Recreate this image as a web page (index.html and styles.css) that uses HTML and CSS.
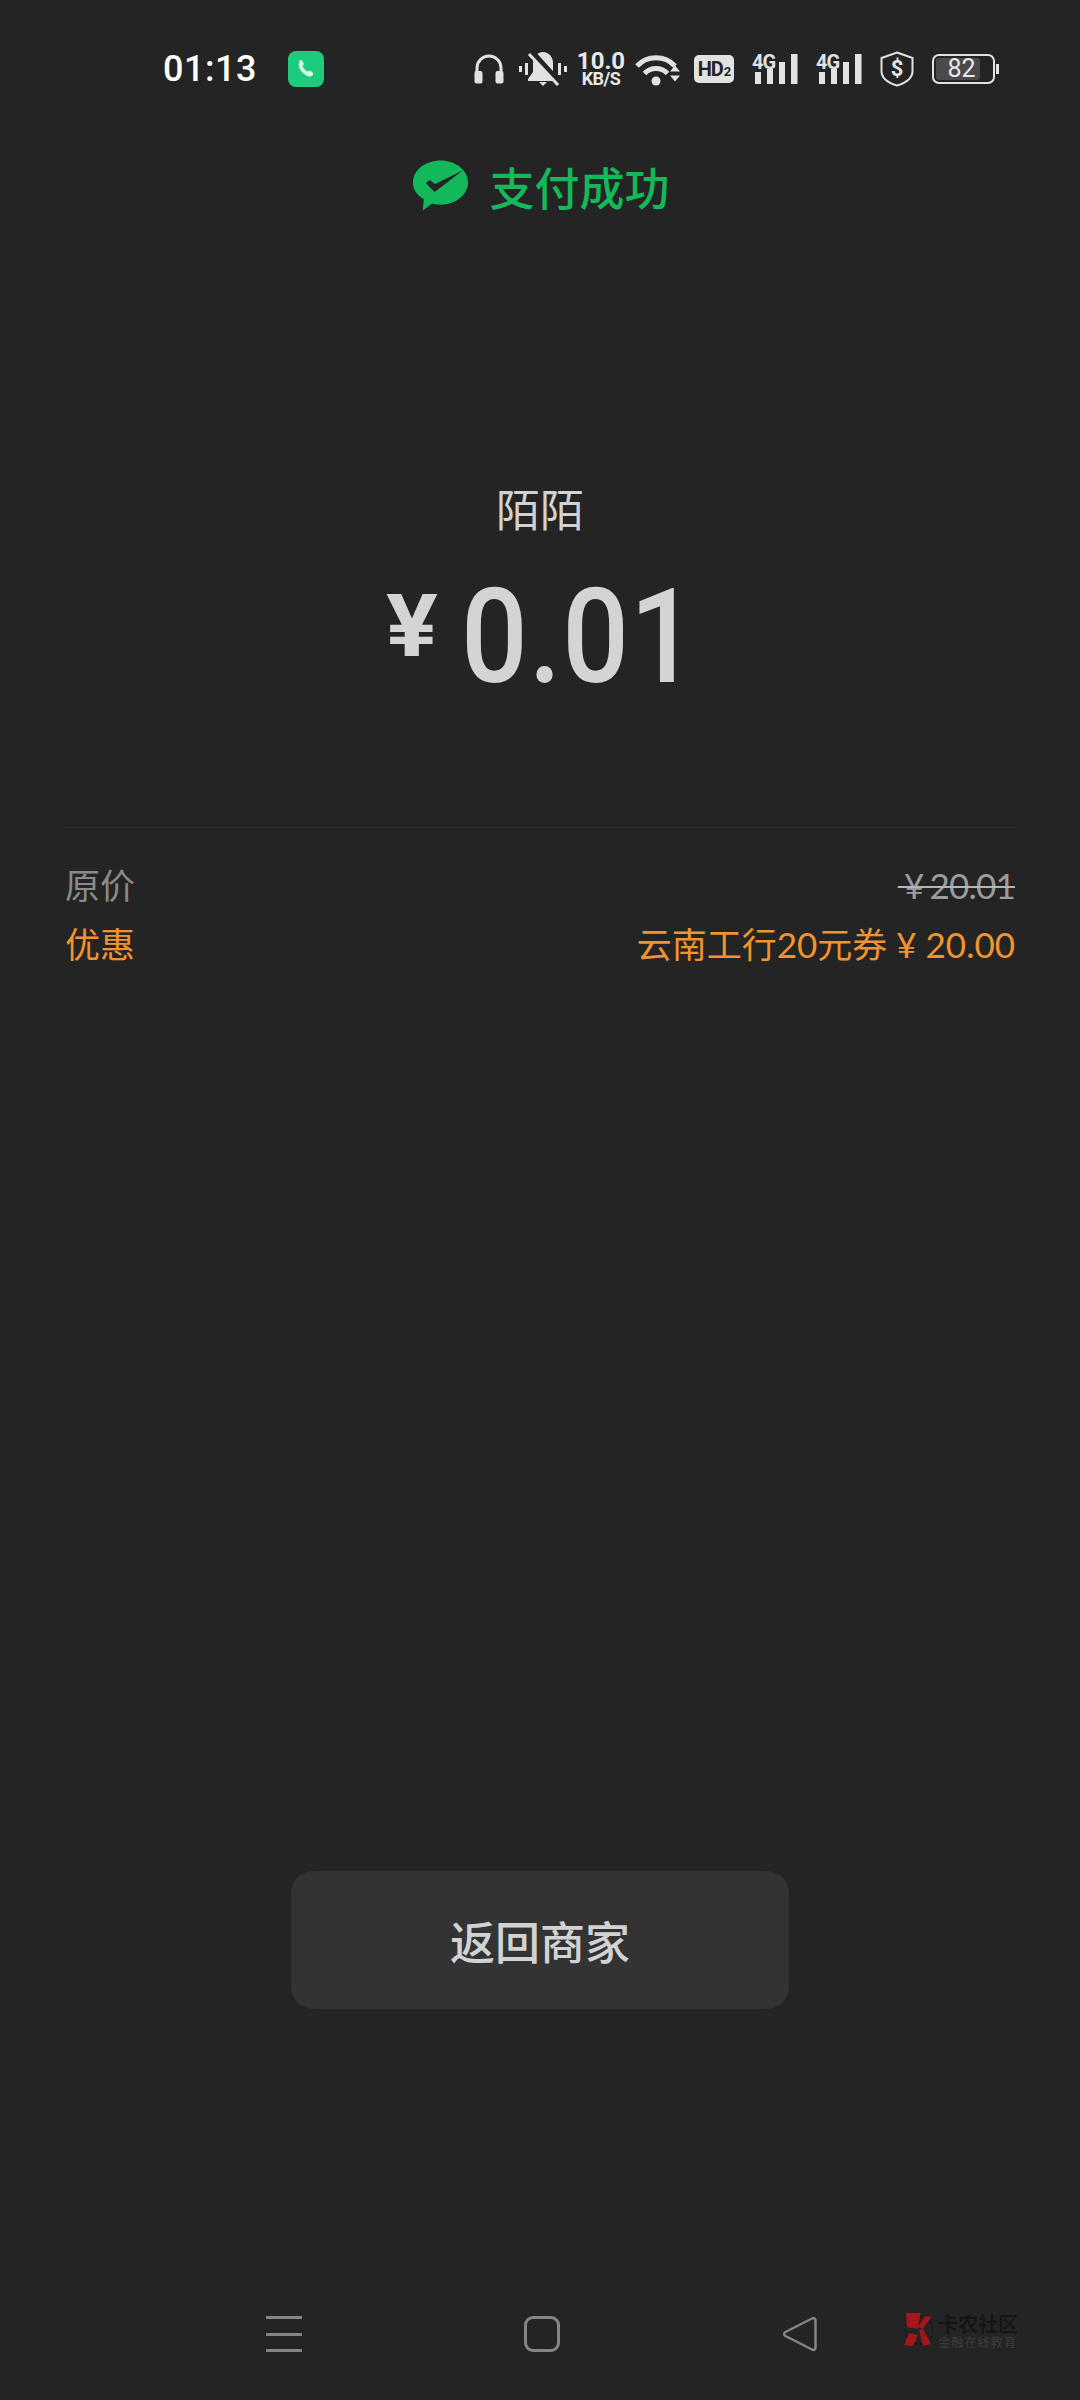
FILE: index.html
```html
<!DOCTYPE html>
<html lang="zh-CN">
  <head>
    <meta charset="UTF-8">
    <meta name="viewport" content="width=device-width, initial-scale=1.0">
    <title>支付成功</title>
    <link rel="stylesheet" href="styles.css">
  </head>
  <body>
    <div class="page">
      <div class="status-bar">
        <span class="time">01:13</span>
        <span class="call-icon">
          <svg width="36" height="36" viewBox="0 0 36 36"><path d="M11.500 9.500c1-.9 2.200-.7 2.800.3l1.200 2.100c.5.900.3 1.700-.4 2.400l-.7.700c.8 2 2.600 4.200 5.200 5.600l.9-.6c.8-.5 1.600-.5 2.300.1l1.800 1.500c.9.800.9 1.900.1 2.700-1.200 1.200-3 1.700-4.800 1-4.300-1.700-7.800-5.400-9-10-.4-1.900.100-3.700.6-5.800z" fill="#d8f8e6"/></svg>
        </span>
        <div class="status-icons">
          <svg class="ic-phones" width="30" height="30" viewBox="0 0 30 30">
            <path d="M3 18v-4a12 12 0 0 1 24 0v4" fill="none" stroke="#e2e2e2" stroke-width="3"/>
            <rect x="0.500" y="17" width="8" height="12.500" rx="2" fill="#e2e2e2"/>
            <rect x="21.500" y="17" width="8" height="12.500" rx="2" fill="#e2e2e2"/>
          </svg>
          <svg class="ic-bell" width="50" height="36" viewBox="0 0 50 36">
            <path d="M25 1c6 0 10 5 10 11v9l5 7v2H10v-2l5-7v-9c0-6 4-11 10-11z" fill="#e2e2e2"/>
            <path d="M21 31h8l-4 4z" fill="#e2e2e2"/>
            <path d="M13 1l29 32" stroke="#242424" stroke-width="7"/>
            <path d="M11 3l29 31" stroke="#e2e2e2" stroke-width="3"/>
            <rect x="1" y="15" width="3" height="6" fill="#e2e2e2"/>
            <rect x="7" y="12" width="3" height="12" fill="#e2e2e2"/>
            <rect x="40" y="12" width="3" height="12" fill="#e2e2e2"/>
            <rect x="46" y="15" width="3" height="6" fill="#e2e2e2"/>
          </svg>
          <div class="speed">
            <span class="speed-num">10.0</span>
            <span class="speed-unit">KB/S</span>
          </div>
          <svg class="ic-wifi" width="45" height="34" viewBox="0 0 45 34">
            <path d="M2 14a26 26 0 0 1 38 0" fill="none" stroke="#e2e2e2" stroke-width="5"/>
            <path d="M9.500 21.500a16 16 0 0 1 23 0" fill="none" stroke="#e2e2e2" stroke-width="5"/>
            <circle cx="21" cy="29" r="4.500" fill="#e2e2e2"/>
            <path d="M35 19.500l5-6 5 6zM35 23.500l5 6 5-6z" fill="#e2e2e2"/>
          </svg>
          <div class="hd-badge">HD<span class="hd-sub">2</span></div>
          <div class="signal">
            <span class="signal-label">4G</span>
            <svg width="46" height="34" viewBox="0 0 46 34">
              <rect x="3" y="20" width="6" height="12" fill="#e2e2e2"/>
              <rect x="15" y="17" width="6" height="15" fill="#e2e2e2"/>
              <rect x="27" y="10" width="6" height="22" fill="#e2e2e2"/>
              <rect x="39" y="2" width="6.500" height="30" fill="#e2e2e2"/>
            </svg>
          </div>
          <div class="signal">
            <span class="signal-label">4G</span>
            <svg width="46" height="34" viewBox="0 0 46 34">
              <rect x="3" y="20" width="6" height="12" fill="#e2e2e2"/>
              <rect x="15" y="17" width="6" height="15" fill="#e2e2e2"/>
              <rect x="27" y="10" width="6" height="22" fill="#e2e2e2"/>
              <rect x="39" y="2" width="6.500" height="30" fill="#e2e2e2"/>
            </svg>
          </div>
          <svg class="ic-shield" width="34" height="36" viewBox="0 0 34 36">
            <path d="M17 1.500L32.500 7v13c0 7-7 12-15.500 14.500C8.500 32 1.500 27 1.500 20V7z" fill="none" stroke="#e2e2e2" stroke-width="2"/>
            <text x="17" y="25" class="shield-label" text-anchor="middle">$</text>
          </svg>
          <div class="battery">
            <div class="battery-body">
              <div class="battery-fill"></div>
              <span class="battery-num">82</span>
            </div>
            <div class="battery-nub"></div>
          </div>
        </div>
      </div>

      <div class="title-bar">
        <svg class="wechat-icon" width="55" height="54" viewBox="0 0 56 54">
          <path d="M28 1c15 0 28 9.500 28 22.500S43 46 28 46c-3 0-6-.4-8.500-1.200L10 52l1-11.500C4 36.500 0 30.500 0 23.500 0 10.500 13 1 28 1z" fill="#12b85a"/>
          <path d="M13 24l4-3 5.500 4L51 11 22 33z" fill="#242424"/>
        </svg>
        <span class="title-text">支付成功</span>
      </div>

      <div class="merchant">陌陌</div>
      <div class="amount">
        <span class="amount-yen">¥</span>
        <span class="amount-num">0.01</span>
      </div>

      <div class="details">
        <div class="detail-row">
          <span>原价</span>
          <span class="origin-price">&nbsp;¥ 20.01</span>
        </div>
        <div class="detail-row discount">
          <span>优惠</span>
          <span>云南工行20元券 ¥ 20.00</span>
        </div>
      </div>

      <div class="actions">
        <button class="back-btn">返回商家</button>
      </div>

      <div class="nav-bar">
        <div class="nav-menu">
          <span></span><span></span><span></span>
        </div>
        <div class="nav-home"></div>
        <svg class="nav-back" width="36" height="36" viewBox="0 0 36 36">
          <path d="M30 2.500c1.800-1 3.500 0 3.500 2v27c0 2-1.700 3-3.500 2L3.500 20c-1.800-1-1.800-3 0-4z" fill="none" stroke="#858585" stroke-width="2.500" stroke-linejoin="round"/>
        </svg>
      </div>

      <div class="watermark">
        <svg width="30" height="34" viewBox="0 0 30 34">
          <circle cx="16" cy="17" r="14" fill="none" stroke="#161616" stroke-width="1.500" stroke-dasharray="3 3"/>
          <path d="M3 0l15-1-3 17-11-2zM22 3l6 1-8 12-5-2zM1 32l5-12 9 2-5 11zM16 17l4-1 8 15-8 2z" fill="#a3161c"/>
        </svg>
        <div class="watermark-text">
          <span class="wm-main">卡农社区</span>
          <span class="wm-sub">金融在线教育</span>
        </div>
      </div>
    </div>
  </body>
</html>
```

FILE: styles.css
```css
body, html {
  margin: 0;
  padding: 0;
  width: 1080px;
  height: 2400px;
  background-color: #242424;
  font-family: 'Lato', 'Noto Sans CJK SC', sans-serif;
  overflow: hidden;
}

.page {
  position: relative;
  width: 1080px;
  height: 2400px;
  display: flex;
  flex-direction: column;
}

/* status bar */
.status-bar {
  height: 138px;
  display: flex;
  align-items: center;
  padding-left: 163px;
  box-sizing: border-box;
}

.time {
  font-family: 'Roboto', sans-serif;
  font-size: 36px;
  font-weight: 500;
  letter-spacing: 0.500px;
  color: #fff;
  width: 125px;
}

.call-icon {
  width: 36px;
  height: 36px;
  background-color: #1ccb7c;
  border-radius: 8px;
  display: block;
}

.call-icon svg {
  display: block;
}

.status-icons {
  display: flex;
  align-items: center;
  margin-left: 150px;
}

.ic-bell {
  margin-left: 14px;
}

.speed {
  width: 48px;
  margin-left: 9px;
  display: flex;
  flex-direction: column;
  align-items: center;
  font-family: 'Roboto', sans-serif;
  font-weight: 700;
  color: #e8e8e8;
}

.speed-num {
  font-size: 24px;
  line-height: 20px;
}

.speed-unit {
  font-size: 18px;
  line-height: 16px;
  letter-spacing: -0.500px;
}

.ic-wifi {
  margin-left: 10px;
}

.hd-badge {
  width: 40px;
  height: 28px;
  margin-left: 14px;
  background-color: #e2e2e2;
  border-radius: 5px;
  color: #242424;
  font-family: 'Roboto', sans-serif;
  font-weight: 700;
  font-size: 20px;
  line-height: 28px;
  text-align: center;
  letter-spacing: -1px;
}

.hd-sub {
  font-size: 13px;
  margin-left: 1px;
}

.signal {
  position: relative;
  width: 46px;
  height: 34px;
  margin-left: 18px;
}

.signal svg {
  display: block;
}

.signal-label {
  position: absolute;
  left: 0;
  top: 0;
  font-family: 'Roboto', sans-serif;
  font-weight: 700;
  font-size: 20px;
  line-height: 20px;
  letter-spacing: -1px;
  color: #e2e2e2;
}

.ic-shield {
  margin-left: 18px;
}

.shield-label {
  font-family: 'Roboto', sans-serif;
  font-weight: 700;
  font-size: 22px;
  fill: #e2e2e2;
}

.battery {
  display: flex;
  align-items: center;
  margin-left: 18px;
}

.battery-body {
  position: relative;
  width: 63px;
  height: 30px;
  box-sizing: border-box;
  border: 2px solid #e2e2e2;
  border-radius: 7px;
  padding: 2px;
}

.battery-fill {
  width: 80%;
  height: 100%;
  background-color: #4a4a4a;
  border-radius: 3px;
}

.battery-num {
  position: absolute;
  left: 0;
  right: 4px;
  top: 0;
  text-align: center;
  font-family: 'Roboto', sans-serif;
  font-size: 25px;
  line-height: 26px;
  color: #e8e8e8;
}

.battery-nub {
  width: 3px;
  height: 10px;
  margin-left: 1px;
  background-color: #e2e2e2;
}

/* header */
.title-bar {
  height: 96px;
  display: flex;
  align-items: center;
  justify-content: center;
  gap: 21px;
  padding-left: 3px;
}

.title-text {
  font-size: 45px;
  font-weight: 500;
  color: #12b85a;
}

/* amount */
.merchant {
  margin-top: 246px;
  height: 60px;
  line-height: 60px;
  text-align: center;
  font-size: 44px;
  color: #d2d2d2;
}

.amount {
  margin-top: 37px;
  height: 120px;
  display: flex;
  align-items: baseline;
  padding-left: 386px;
  color: #d4d4d4;
  font-family: 'Roboto', sans-serif;
  font-weight: 500;
  line-height: 120px;
}

.amount-yen {
  font-size: 88px;
  font-weight: 700;
  transform: translateY(-26px) scaleX(1.100);
  transform-origin: left center;
}

.amount-num {
  font-size: 132px;
  margin-left: 28px;
  letter-spacing: 1px;
  transform: scaleX(0.890);
  transform-origin: left center;
}

.details {
  margin: 130px 64px 0;
  padding-top: 28px;
  border-top: 1px solid #2d2d2d;
}

.detail-row {
  display: flex;
  justify-content: space-between;
  height: 59px;
  line-height: 59px;
  font-size: 35px;
  color: #8a8a8a;
  padding-left: 1px;
  padding-right: 1px;
}

.origin-price {
  color: #9c9c9c;
  letter-spacing: -0.800px;
  word-spacing: -2px;
  text-decoration: line-through;
  text-decoration-thickness: 2px;
  text-decoration-color: #b5b5b5;
}

.discount {
  color: #f2942d;
}

/* bottom button */
.actions {
  margin-top: auto;
  display: flex;
  justify-content: center;
}

.back-btn {
  width: 498px;
  height: 138px;
  background-color: #333;
  border: none;
  border-radius: 22px;
  color: #d2d2d2;
  font-family: 'Noto Sans CJK SC', sans-serif;
  font-size: 45px;
  font-weight: 500;
}

/* nav bar */
.nav-bar {
  height: 391px;
  display: flex;
  align-items: flex-end;
  gap: 222px;
  padding-left: 266px;
  padding-bottom: 48px;
  box-sizing: border-box;
}

.nav-menu {
  width: 36px;
  height: 36px;
  display: flex;
  flex-direction: column;
  justify-content: space-between;
}

.nav-menu span {
  display: block;
  height: 3px;
  background-color: #858585;
}

.nav-home {
  width: 36px;
  height: 36px;
  box-sizing: border-box;
  border: 3px solid #858585;
  border-radius: 9px;
}

/* forum watermark over the nav bar */
.watermark {
  position: absolute;
  left: 903px;
  top: 2313px;
  display: flex;
  gap: 5px;
  align-items: flex-start;
}

.watermark-text {
  display: flex;
  flex-direction: column;
  font-family: 'Noto Sans CJK SC', sans-serif;
}

.wm-main {
  font-size: 20px;
  font-weight: 700;
  line-height: 21px;
  color: #151515;
}

.wm-sub {
  font-size: 12px;
  line-height: 16px;
  letter-spacing: 1.200px;
  color: #3c3c3c;
}
```
